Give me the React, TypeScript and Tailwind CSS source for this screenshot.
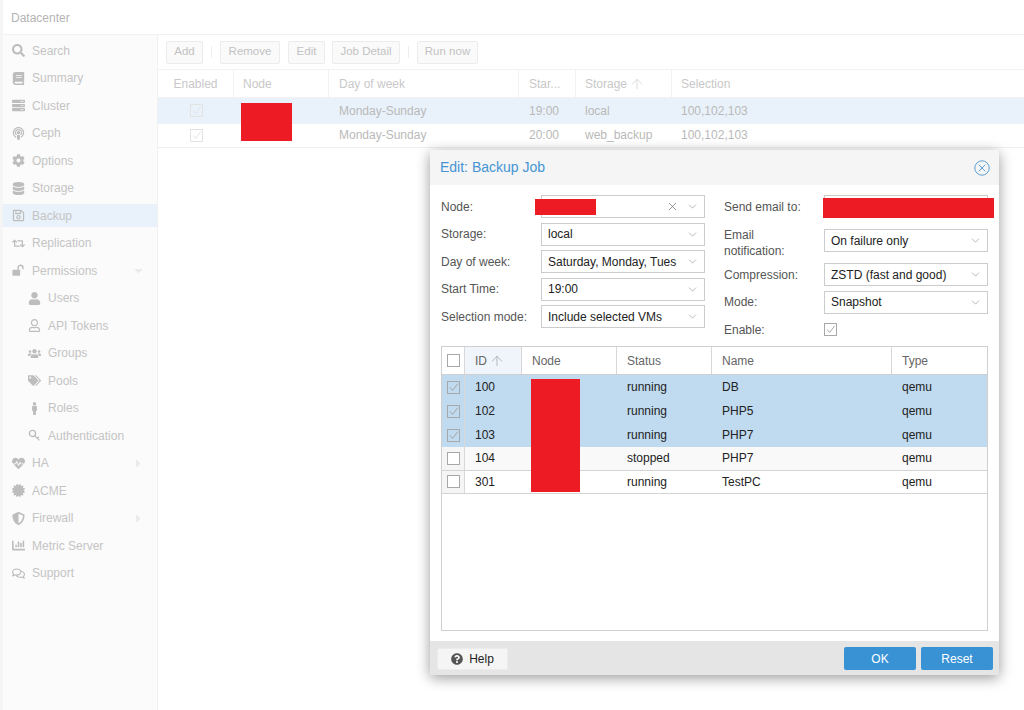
import type { ComponentType, ReactNode } from "react";
import { ArrowUp, ChevronDown, X } from "lucide-react";
import {
  FaBook,
  FaCaretDown,
  FaCaretRight,
  FaCertificate,
  FaChartBar,
  FaCog,
  FaDatabase,
  FaHeartbeat,
  FaMale,
  FaPodcast,
  FaQuestionCircle,
  FaRegComments,
  FaRegSave,
  FaRegUser,
  FaRetweet,
  FaSearch,
  FaServer,
  FaShieldAlt,
  FaTags,
  FaUser,
  FaUsers,
} from "react-icons/fa";

type Icon = ComponentType<{ className?: string }>;

// open padlock, shackle swung out to the right
function OpenLock({ className }: { className?: string }) {
  return (
    <svg viewBox="0 0 16 16" className={className} fill="none">
      <rect x="0.5" y="7" width="9.5" height="7.5" rx="1" fill="currentColor" />
      <path d="M7.5 7 V4.5 a3 3 0 0 1 6 0 V6.5" stroke="currentColor" strokeWidth="1.7" />
    </svg>
  );
}

// outline key, bow at the top left
function OutlineKey({ className }: { className?: string }) {
  return (
    <svg viewBox="0 0 16 16" className={className} fill="none" stroke="currentColor" strokeWidth="1.6">
      <circle cx="5.5" cy="5.5" r="3.8" />
      <path d="M8.2 8.2 L14 14 M11.3 11.3 L13.3 9.6" />
    </svg>
  );
}

const NAV: { label: string; icon: Icon; sub?: boolean; active?: boolean; caret?: "down" | "right" }[] = [
  { label: "Search", icon: FaSearch },
  { label: "Summary", icon: FaBook },
  { label: "Cluster", icon: FaServer },
  { label: "Ceph", icon: FaPodcast },
  { label: "Options", icon: FaCog },
  { label: "Storage", icon: FaDatabase },
  { label: "Backup", icon: FaRegSave, active: true },
  { label: "Replication", icon: FaRetweet },
  { label: "Permissions", icon: OpenLock, caret: "down" },
  { label: "Users", icon: FaUser, sub: true },
  { label: "API Tokens", icon: FaRegUser, sub: true },
  { label: "Groups", icon: FaUsers, sub: true },
  { label: "Pools", icon: FaTags, sub: true },
  { label: "Roles", icon: FaMale, sub: true },
  { label: "Authentication", icon: OutlineKey, sub: true },
  { label: "HA", icon: FaHeartbeat, caret: "right" },
  { label: "ACME", icon: FaCertificate },
  { label: "Firewall", icon: FaShieldAlt, caret: "right" },
  { label: "Metric Server", icon: FaChartBar },
  { label: "Support", icon: FaRegComments },
];

const JOBS = [
  { day: "Monday-Sunday", start: "19:00", storage: "local", selected: true },
  { day: "Monday-Sunday", start: "20:00", storage: "web_backup", selected: false },
];

const VMS = [
  { id: "100", status: "running", name: "DB", checked: true },
  { id: "102", status: "running", name: "PHP5", checked: true },
  { id: "103", status: "running", name: "PHP7", checked: true },
  { id: "104", status: "stopped", name: "PHP7", checked: false },
  { id: "301", status: "running", name: "TestPC", checked: false },
];

function Tool({ children, width }: { children: ReactNode; width: string }) {
  return (
    <button
      className={`h-[23px] rounded-[2px] border border-[#ececec] bg-[#fafafa] text-[11.5px] text-[#c2c2c2] ${width}`}
    >
      {children}
    </button>
  );
}

function Check({ on, faded }: { on?: boolean; faded?: boolean }) {
  return (
    <span
      className={`flex h-[13px] w-[13px] items-center justify-center border ${
        faded ? "border-[#e3e3e3]" : "border-[#a8a8a8]"
      } ${on ? "" : "bg-white"}`}
    >
      {on && (
        <svg viewBox="0 0 13 13" className="h-[13px] w-[13px]" fill="none">
          <path
            d="M2.5 6.5 L5.5 10 L11.5 2"
            stroke={faded ? "#e0e0e0" : "#a0a0a0"}
            strokeWidth="1.1"
          />
        </svg>
      )}
    </span>
  );
}

function Combo({ value, clear }: { value?: string; clear?: boolean }) {
  return (
    <div className="flex h-[23px] w-[164px] items-center border border-[#cccccc] bg-white pl-[6px] pr-[5px] text-[12px] text-[#222]">
      <span className="min-w-0 flex-1 whitespace-nowrap">{value}</span>
      {clear && <X className="mr-[7px] h-[13px] w-[13px] text-[#666]" strokeWidth={1.25} />}
      <ChevronDown className="h-[13px] w-[13px] text-[#999]" strokeWidth={1.25} />
    </div>
  );
}

function Field({ label, children, top }: { label: ReactNode; children: ReactNode; top: string }) {
  return (
    <div className={`flex items-center ${top}`}>
      <div className="w-[100px] text-[12px] leading-[16px] text-[#555]">{label}</div>
      {children}
    </div>
  );
}

export default function App() {
  return (
    <div className="relative h-[710px] w-[1024px] overflow-hidden bg-[#f5f5f5] pl-[3px] font-['Liberation_Sans',Arial,sans-serif]">
      <div className="flex h-full flex-col bg-white">
        <div className="flex h-[35px] shrink-0 items-center border-b border-[#f0f0f0] pl-[8px] pt-[1px] text-[12px] text-[#b4b4b4]">
          Datacenter
        </div>
        <div className="flex min-h-0 flex-1">
          <nav className="w-[155px] shrink-0 border-r border-[#f1f1f1] bg-[#fbfbfb] pt-[2px]">
            {NAV.map(({ label, icon: I, sub, active, caret }) => (
              <div key={label} className="flex h-[27.5px] items-center">
                <div
                  className={`flex h-[23px] w-full items-center text-[12px] text-[#c4c4c4] ${
                    sub ? "pl-[24px]" : "pl-[8px]"
                  } ${active ? "bg-[#e9f2fa]" : ""}`}
                >
                  <span className="flex w-[14px] justify-center">
                    <I className="h-[13px] w-[13px] text-[#bdbdbd]" />
                  </span>
                  <span className="ml-[7px] flex-1">{label}</span>
                  {caret === "down" && <FaCaretDown className="mr-[12px] h-[13px] w-[13px] text-[#ebebeb]" />}
                  {caret === "right" && <FaCaretRight className="mr-[12px] h-[13px] w-[13px] text-[#ebebeb]" />}
                </div>
              </div>
            ))}
          </nav>
          <main className="min-w-0 flex-1">
            <div className="flex h-[35px] items-center border-b border-[#f2f2f2] pl-[8px]">
              <Tool width="w-[37px]">Add</Tool>
              <span className="mx-[8px] h-[12px] w-px bg-[#eeeeee]" />
              <Tool width="w-[60px]">Remove</Tool>
              <span className="w-[8px]" />
              <Tool width="w-[37px]">Edit</Tool>
              <span className="w-[7px]" />
              <Tool width="w-[68px]">Job Detail</Tool>
              <span className="mx-[8px] h-[12px] w-px bg-[#eeeeee]" />
              <Tool width="w-[61px]">Run now</Tool>
            </div>
            <div className="grid h-[28px] grid-cols-[76px_95px_190px_57px_96px_1fr] border-b border-[#f2f2f2] text-[12px] text-[#c8c8c8]">
              <div className="flex items-center justify-center border-r border-[#f2f2f2]">Enabled</div>
              <div className="flex items-center border-r border-[#f2f2f2] pl-[9px]">Node</div>
              <div className="flex items-center border-r border-[#f2f2f2] pl-[10px]">Day of week</div>
              <div className="flex items-center border-r border-[#f2f2f2] pl-[10px]">Star...</div>
              <div className="flex items-center gap-[2px] border-r border-[#f2f2f2] pl-[9px]">
                Storage
                <ArrowUp className="h-[16px] w-[16px] text-[#d4d4d4]" strokeWidth={1.25} />
              </div>
              <div className="flex items-center pl-[9px]">Selection</div>
            </div>
            {JOBS.map((job) => (
              <div
                key={job.start}
                className={`grid grid-cols-[76px_95px_190px_57px_96px_1fr] items-center text-[12px] text-[#b9b9b9] ${
                  job.selected ? "h-[25.5px] bg-[#e9f2fa]" : "h-[23px] bg-white"
                }`}
              >
                <div className="flex justify-center">
                  <Check on faded />
                </div>
                <div />
                <div className="pl-[10px]">{job.day}</div>
                <div className="pl-[10px]">{job.start}</div>
                <div className="pl-[9px]">{job.storage}</div>
                <div className="pl-[9px]">100,102,103</div>
              </div>
            ))}
            <div className="border-t border-[#efefef]" />
          </main>
        </div>
      </div>

      {/* redacted node cell in the job list */}
      <div className="absolute left-[241px] top-[103px] h-[38px] w-[51px] bg-[#ed1c24]" />

      <section className="absolute left-[430px] top-[150px] flex h-[525px] w-[569px] flex-col overflow-hidden rounded-[3px] bg-white shadow-[0_3px_14px_rgba(0,0,0,0.4)]">
        <header className="flex h-[35px] shrink-0 items-center justify-between bg-[#f5f5f5] pl-[10px] pr-[9px]">
          <h2 className="text-[14px] text-[#4594d4]">Edit: Backup Job</h2>
          <svg viewBox="0 0 16 16" className="h-[16px] w-[16px]" fill="none" stroke="#5c9fd6">
            <circle cx="8" cy="8" r="7.2" />
            <path d="M4.8 4.8 L11.2 11.2 M11.2 4.8 L4.8 11.2" />
          </svg>
        </header>

        <div className="flex h-[161px] shrink-0 pl-[11px] pr-[11px] pt-[10px]">
          <div className="w-[283px]">
            <Field label="Node:" top="">
              <Combo clear />
            </Field>
            <Field label="Storage:" top="mt-[4.5px]">
              <Combo value="local" />
            </Field>
            <Field label="Day of week:" top="mt-[4.5px]">
              <Combo value="Saturday, Monday, Tues" />
            </Field>
            <Field label="Start Time:" top="mt-[4.5px]">
              <Combo value="19:00" />
            </Field>
            <Field label="Selection mode:" top="mt-[4.5px]">
              <Combo value="Include selected VMs" />
            </Field>
          </div>
          <div className="w-[264px]">
            <Field label="Send email to:" top="">
              <div className="h-[23px] w-[164px] border border-[#cccccc] bg-white" />
            </Field>
            <div className="mt-[9px] flex h-[32px] items-start">
              <div className="w-[100px] text-[12px] leading-[16px] text-[#555]">
                Email
                <br />
                notification:
              </div>
              <div className="mt-[2px]">
                <Combo value="On failure only" />
              </div>
            </div>
            <Field label="Compression:" top="mt-[4px]">
              <Combo value="ZSTD (fast and good)" />
            </Field>
            <Field label="Mode:" top="mt-[4.5px]">
              <Combo value="Snapshot" />
            </Field>
            <Field label="Enable:" top="mt-[4.5px] h-[23px]">
              <Check on />
            </Field>
          </div>
        </div>

        <div className="mx-[11px] h-[285px] shrink-0 border border-[#cfcfcf]">
          <div className="grid h-[28px] grid-cols-[23px_57px_95px_95px_180px_1fr] border-b border-[#cfcfcf] text-[12px] text-[#666]">
            <div className="flex items-center justify-center border-r border-[#d8d8d8]">
              <Check />
            </div>
            <div className="flex items-center gap-[2px] border-r border-[#d8d8d8] bg-[#eff5fb] pl-[10px]">
              ID
              <ArrowUp className="h-[16px] w-[16px] text-[#aaa]" strokeWidth={1.25} />
            </div>
            <div className="flex items-center border-r border-[#d8d8d8] pl-[10px]">Node</div>
            <div className="flex items-center border-r border-[#d8d8d8] pl-[10px]">Status</div>
            <div className="flex items-center border-r border-[#d8d8d8] pl-[10px]">Name</div>
            <div className="flex items-center pl-[10px]">Type</div>
          </div>
          {VMS.map((vm, i) => (
            <div
              key={vm.id}
              className={`grid grid-cols-[23px_57px_95px_95px_180px_1fr] items-center text-[12px] text-[#222] ${
                vm.checked
                  ? "h-[24px] bg-[#c0daf0]"
                  : `h-[23.5px] border-b border-[#d4d4d4] ${i === 3 ? "bg-[#f9f9f9]" : "bg-white"}`
              }`}
            >
              <div
                className={`flex h-full items-center justify-center border-r border-[#d8d8d8] ${
                  vm.checked ? "" : "bg-[#f5f5f5]"
                }`}
              >
                <Check on={vm.checked} />
              </div>
              <div className="pl-[10px]">{vm.id}</div>
              <div />
              <div className="pl-[10px]">{vm.status}</div>
              <div className="pl-[10px]">{vm.name}</div>
              <div className="pl-[10px]">qemu</div>
            </div>
          ))}
        </div>

        <footer className="mt-[10px] flex h-[35px] shrink-0 items-center justify-between bg-[#e5e5e5] pl-[7px] pr-[6px]">
          <button className="flex h-[22px] w-[71px] items-center justify-center gap-[6px] rounded-[2px] border border-[#ececec] bg-[#f5f5f5] text-[12px] text-[#222]">
            <FaQuestionCircle className="h-[12px] w-[12px] text-[#555]" />
            Help
          </button>
          <div className="flex gap-[5px]">
            <button className="h-[23px] w-[72px] rounded-[2px] bg-[#3892d4] text-[12px] text-white">OK</button>
            <button className="h-[23px] w-[72px] rounded-[2px] bg-[#3892d4] text-[12px] text-white">Reset</button>
          </div>
        </footer>
      </section>

      {/* redaction blocks painted over the dialog */}
      <div className="absolute left-[535px] top-[199px] h-[16px] w-[61px] bg-[#ed1c24]" />
      <div className="absolute left-[823px] top-[198px] h-[20px] w-[171px] bg-[#ed1c24]" />
      <div className="absolute left-[531px] top-[379px] h-[113px] w-[49px] bg-[#ed1c24]" />
    </div>
  );
}
